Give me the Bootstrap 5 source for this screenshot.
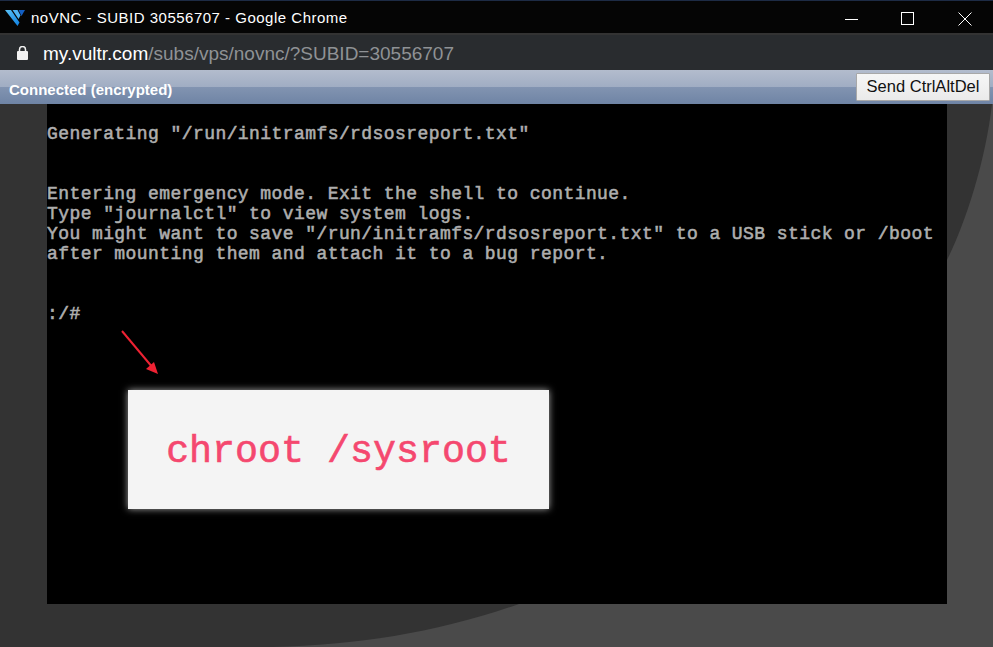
<!DOCTYPE html>
<html lang="en"><head><meta charset="utf-8"><title>noVNC</title>
<link href="https://cdn.jsdelivr.net/npm/bootstrap@5.3.0/dist/css/bootstrap.min.css" rel="stylesheet">
<style>
html,body{height:100%;overflow:hidden}
body{background:#000}
.win{width:993px;height:647px}
.titlebar{height:35px;background:#050505;border-top:1px solid #1d2b45;border-bottom:2px solid #333;color:#fff;font:15px/1 "Liberation Sans",sans-serif;letter-spacing:.5px}
.titlebar svg.logo{margin:1px 6px 0 5px}
.winbtn{width:57px;height:100%;padding-top:3px}
.addr{height:35px;background:#292c2f;font:19px/1 "Liberation Sans",sans-serif;color:#fff;padding-top:1px}
.addr .rest{color:#8f9295}
.addr svg{margin:0 15px 0 17px}
.vncbar{height:34px;background:linear-gradient(#b3bccd 0,#a0adc3 50%,#8294b1 50%,#6f84a5 100%);color:#fff;font:bold 15px/1 "Liberation Sans",sans-serif;padding:0 3px 0 9px}
.vncbar>span{padding-top:5px}
.sendbtn{background:linear-gradient(#f6f6f6,#eaeaea);border:1px solid #a8a8a8;color:#111;font:16.5px/1 "Liberation Sans",sans-serif;padding:0 0 2px;width:134px;height:28px;border-radius:1px}
.desk{height:543px;background:#4a4a4a;padding:0 46px 43px 47px;position:relative;overflow:hidden}
.swoosh{position:absolute;left:0;top:0;width:993px;height:543px}
.term{position:relative;height:500px;background:#000;padding-top:20px}
.term pre{margin:0;font:18px/20px "Liberation Mono","DejaVu Sans Mono",monospace;color:#aeaeae;-webkit-text-stroke:.55px #aeaeae;letter-spacing:.425px;overflow:hidden}
.overlay{position:absolute;left:81px;top:286px;width:421px;height:119px;background:#f4f4f4;box-shadow:0 0 7px rgba(255,255,255,.65);color:#f4486f;font:38.3px/1 "Liberation Mono",monospace;-webkit-text-stroke:.6px #f4486f;padding-top:5px}
.arrow{position:absolute;left:70px;top:222px}
</style></head>
<body>
<div class="win d-flex flex-column">
  <div class="titlebar d-flex align-items-center">
    <svg class="logo" width="20" height="18" viewBox="0 0 20 18"><defs><linearGradient id="lg" x1="0" y1="0" x2="1" y2="1"><stop offset="0" stop-color="#5cc3f7"/><stop offset="1" stop-color="#0d7fe2"/></linearGradient></defs><path d="M0 1h6l8.500 12.500L12.500 17z" fill="url(#lg)"/><path d="M7.500 1h5l3 5.500-2 3.500z" fill="#4fb4f4"/><path d="M13.500 1H20l-3.500 6z" fill="#135fc4"/></svg>
    <span>noVNC - SUBID 30556707 - Google Chrome</span>
    <div class="ms-auto d-flex h-100 align-items-center">
      <div class="winbtn d-flex align-items-center justify-content-center"><svg width="14" height="14"><path d="M1 7.500h13" stroke="#fff"/></svg></div>
      <div class="winbtn d-flex align-items-center justify-content-center"><svg width="14" height="14"><rect x=".5" y=".5" width="12" height="12" fill="none" stroke="#fff"/></svg></div>
      <div class="winbtn d-flex align-items-center justify-content-center"><svg width="14" height="14"><path d="M.5.500l13 13M13.500.500l-13 13" stroke="#fff"/></svg></div>
    </div>
  </div>
  <div class="addr d-flex align-items-center">
    <svg width="11" height="14" viewBox="0 0 11 14"><rect y="5" width="11" height="9" rx="1" fill="#f2f2f2"/><path d="M2.500 6V3.500a3 3 0 0 1 6 0V6" fill="none" stroke="#f2f2f2" stroke-width="1.500"/></svg>
    <span>my.vultr.com<span class="rest">/subs/vps/novnc/?SUBID=30556707</span></span>
  </div>
  <div class="vncbar d-flex align-items-center justify-content-between">
    <span>Connected (encrypted)</span>
    <button class="sendbtn" type="button">Send CtrlAltDel</button>
  </div>
  <div class="desk">
    <svg class="swoosh" viewBox="0 0 993 543"><path d="M0 0H992C985 60 965 120 947 156C880 300 720 420 519 500C440 528 360 541 272 543H0Z" fill="#333"/></svg>
    <div class="term">
<pre>Generating "/run/initramfs/rdsosreport.txt"


Entering emergency mode. Exit the shell to continue.
Type "journalctl" to view system logs.
You might want to save "/run/initramfs/rdsosreport.txt" to a USB stick or /boot
after mounting them and attach it to a bug report.


:/#</pre>
      <svg class="arrow" width="50" height="50" viewBox="0 0 50 50"><path d="M5 5L36 42" stroke="#ee2233" stroke-width="2"/><path d="M41 48L29 43L37 36Z" fill="#ee2233"/></svg>
      <div class="overlay d-flex align-items-center justify-content-center"><span>chroot /sysroot</span></div>
    </div>
  </div>
</div>
</body></html>
